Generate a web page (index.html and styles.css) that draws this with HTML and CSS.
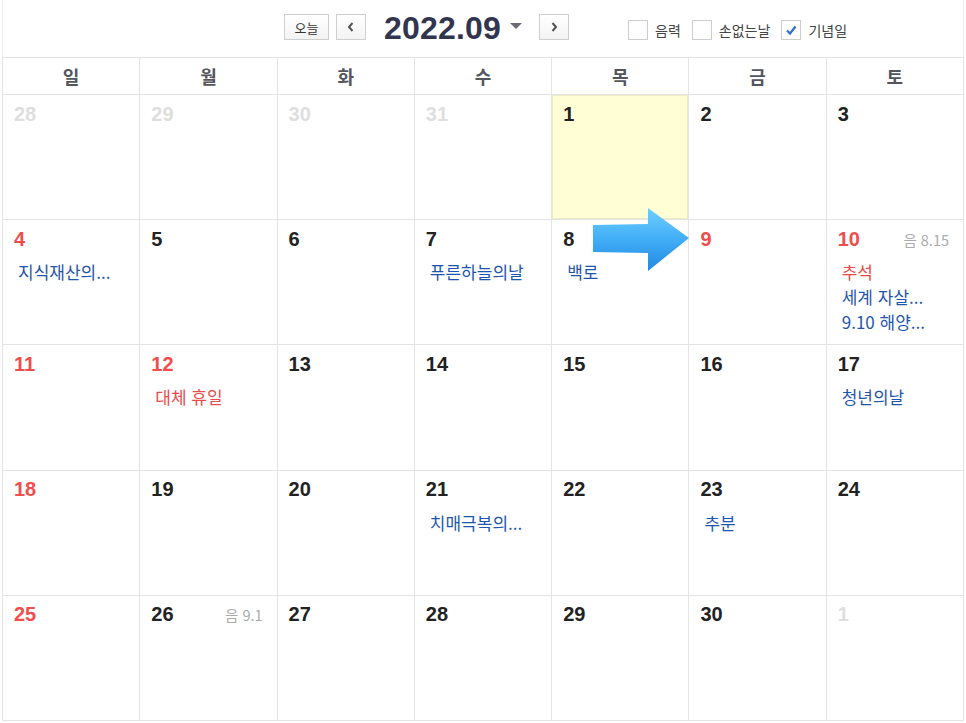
FILE: index.html
```html
<!DOCTYPE html>
<html lang="ko">
<head>
<meta charset="utf-8">
<title>2022.09</title>
<link rel="stylesheet" href="styles.css">
</head>
<body>
<div class="cal">
  <div class="toolbar">
    <div class="nav">
      <button class="btn today">오늘</button>
      <button class="btn step" aria-label="이전">
        <svg width="10" height="12" viewBox="0 0 10 12"><path d="M6.5 2 L3 6 L6.5 10" fill="none" stroke="#555" stroke-width="2"/></svg>
      </button>
      <div class="title">2022.09</div>
      <span class="caret"></span>
      <button class="btn step" aria-label="다음">
        <svg width="10" height="12" viewBox="0 0 10 12"><path d="M3.5 2 L7 6 L3.5 10" fill="none" stroke="#555" stroke-width="2"/></svg>
      </button>
    </div>
    <div class="opts">
      <label class="opt"><span class="box"></span>음력</label>
      <label class="opt"><span class="box"></span>손없는날</label>
      <label class="opt"><span class="box"><svg width="14" height="14" viewBox="0 0 14 14"><path d="M3 7.5 L6 10.5 L11.5 3.5" fill="none" stroke="#2f6fc9" stroke-width="2.2"/></svg></span>기념일</label>
    </div>
  </div>
  <div class="grid">
    <div class="dow">일</div><div class="dow">월</div><div class="dow">화</div><div class="dow">수</div><div class="dow">목</div><div class="dow">금</div><div class="dow">토</div>

    <div class="cell"><div class="top"><span class="num other">28</span></div></div>
    <div class="cell"><div class="top"><span class="num other">29</span></div></div>
    <div class="cell"><div class="top"><span class="num other">30</span></div></div>
    <div class="cell"><div class="top"><span class="num other">31</span></div></div>
    <div class="cell today-cell"><div class="top"><span class="num">1</span></div></div>
    <div class="cell"><div class="top"><span class="num">2</span></div></div>
    <div class="cell"><div class="top"><span class="num">3</span></div></div>

    <div class="cell"><div class="top"><span class="num red">4</span></div><div class="ev">지식재산의...</div></div>
    <div class="cell"><div class="top"><span class="num">5</span></div></div>
    <div class="cell"><div class="top"><span class="num">6</span></div></div>
    <div class="cell"><div class="top"><span class="num">7</span></div><div class="ev">푸른하늘의날</div></div>
    <div class="cell"><div class="top"><span class="num">8</span></div><div class="ev">백로</div></div>
    <div class="cell"><div class="top"><span class="num red">9</span></div></div>
    <div class="cell"><div class="top"><span class="num red">10</span><span class="lunar">음 8.15</span></div><div class="ev red">추석</div><div class="ev">세계 자살...</div><div class="ev">9.10 해양...</div></div>

    <div class="cell"><div class="top"><span class="num red">11</span></div></div>
    <div class="cell"><div class="top"><span class="num red">12</span></div><div class="ev red">대체 휴일</div></div>
    <div class="cell"><div class="top"><span class="num">13</span></div></div>
    <div class="cell"><div class="top"><span class="num">14</span></div></div>
    <div class="cell"><div class="top"><span class="num">15</span></div></div>
    <div class="cell"><div class="top"><span class="num">16</span></div></div>
    <div class="cell"><div class="top"><span class="num">17</span></div><div class="ev">청년의날</div></div>

    <div class="cell"><div class="top"><span class="num red">18</span></div></div>
    <div class="cell"><div class="top"><span class="num">19</span></div></div>
    <div class="cell"><div class="top"><span class="num">20</span></div></div>
    <div class="cell"><div class="top"><span class="num">21</span></div><div class="ev">치매극복의...</div></div>
    <div class="cell"><div class="top"><span class="num">22</span></div></div>
    <div class="cell"><div class="top"><span class="num">23</span></div><div class="ev">추분</div></div>
    <div class="cell"><div class="top"><span class="num">24</span></div></div>

    <div class="cell"><div class="top"><span class="num red">25</span></div></div>
    <div class="cell"><div class="top"><span class="num">26</span><span class="lunar">음 9.1</span></div></div>
    <div class="cell"><div class="top"><span class="num">27</span></div></div>
    <div class="cell"><div class="top"><span class="num">28</span></div></div>
    <div class="cell"><div class="top"><span class="num">29</span></div></div>
    <div class="cell"><div class="top"><span class="num">30</span></div></div>
    <div class="cell"><div class="top"><span class="num other">1</span></div></div>
  </div>
  <svg class="pointer" width="100" height="70" viewBox="0 0 100 70">
    <defs>
      <linearGradient id="ag" x1="0" y1="0" x2="0" y2="1">
        <stop offset="0" stop-color="#6fd0ff"/>
        <stop offset="0.55" stop-color="#3daaf5"/>
        <stop offset="1" stop-color="#2388e0"/>
      </linearGradient>
    </defs>
    <polygon points="2,20 57,19 57,3 98,33 57,66 57,48 2,47" fill="url(#ag)"/>
  </svg>
</div>
</body>
</html>
```

FILE: styles.css
```css
* { box-sizing: border-box; }
html, body { margin: 0; padding: 0; background: #fff; }
body {
  font-family: "Noto Sans CJK KR", "Liberation Sans", sans-serif;
  color: #222;
}
.cal {
  position: relative;
  margin-left: 2px;
  width: 962px;
}
.toolbar {
  height: 57px;
  display: flex;
  align-items: flex-start;
  padding-left: 281px;
  border-left: 1px solid #ececec;
  border-right: 1px solid #ececec;
}
.nav {
  display: flex;
  align-items: center;
  margin-top: 14px;
  height: 26px;
}
.btn {
  height: 26px;
  border: 1px solid #cfcfcf;
  background: linear-gradient(#ffffff, #f3f3f3);
  padding: 0;
  margin: 0;
  display: flex;
  align-items: center;
  justify-content: center;
  font-family: "Noto Sans CJK KR", sans-serif;
  color: #333;
}
.today { width: 45px; font-size: 13px; }
.step { width: 30px; margin-left: 7px; }
.title {
  font-family: "Liberation Sans", Arial, sans-serif;
  font-weight: 700;
  font-size: 32px;
  letter-spacing: 0.2px;
  color: #33354e;
  margin-left: 18px;
  line-height: 26px;
  margin-top: 2px;
}
.caret {
  width: 0; height: 0;
  border-left: 6px solid transparent;
  border-right: 6px solid transparent;
  border-top: 6px solid #6b6b78;
  margin-left: 9px;
  margin-right: 10px;
  margin-top: -2px;
}
.opts {
  display: flex;
  align-items: center;
  margin-left: 59px;
  margin-top: 19px;
  height: 21px;
}
.opt {
  display: flex;
  align-items: center;
  font-size: 14px;
  color: #444;
  margin-right: 11px;
}
.box {
  width: 20px; height: 20px;
  border: 1px solid #cdcdcd;
  background: #fff;
  margin-right: 7px;
  display: flex;
  align-items: center;
  justify-content: center;
}
.grid {
  display: grid;
  grid-template-columns: repeat(7, 1fr);
  grid-template-rows: 36px repeat(5, 1fr);
  gap: 1px;
  padding: 1px;
  background: #e4e4e4;
  height: 664px;
}
.dow {
  background: #fff;
  display: flex;
  align-items: center;
  justify-content: center;
  font-size: 18px;
  font-weight: 700;
  color: #54565e;
}
.cell {
  background: #fff;
  padding: 7px 0 0 0;
  overflow: hidden;
}
.today-cell { background: #fffed5; box-shadow: inset 0 0 0 1px #ecebc6; }
.top {
  display: flex;
  justify-content: space-between;
  align-items: center;
  height: 24px;
  padding: 0 14px 0 11px;
  margin-bottom: 8px;
}
.num {
  font-family: "Liberation Sans", Arial, sans-serif;
  font-weight: 700;
  font-size: 20px;
  color: #222;
}
.num.other { color: #dedede; }
.num.red { color: #f04d4d; }
.lunar {
  font-family: "Noto Sans CJK KR", "Liberation Sans", sans-serif;
  font-size: 14.5px;
  color: #ababab;
}
.ev {
  font-size: 17px;
  line-height: 25px;
  height: 25px;
  padding-left: 15px;
  color: #1f56ad;
  white-space: nowrap;
}
.ev.red { color: #ea4a4a; }
.pointer {
  position: absolute;
  left: 589px;
  top: 205px;
}
```
